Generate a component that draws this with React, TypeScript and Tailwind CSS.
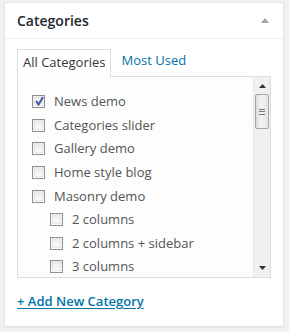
import React from "react";

const font = { fontFamily: '"Open Sans", "Noto Sans", sans-serif' };

function Box({ checked }: { checked?: boolean }) {
  return (
    <span className="relative inline-block w-[13px] h-[13px] border border-[#8f8f8f] bg-[linear-gradient(180deg,#eaeaea,#fdfdfd)] shrink-0">
      <span className="absolute inset-[1px] border border-[#e6e6e6]" />
      {checked && (
        <svg className="absolute left-[1px] top-[0px]" width="11" height="11" viewBox="0 0 11 11">
          <path d="M2.5 5.5 L4.6 8.6 L8.6 1.8" fill="none" stroke="#3d5aa8" strokeWidth="2" strokeLinecap="round" strokeLinejoin="round" />
        </svg>
      )}
    </span>
  );
}

function Row({ label, checked, child }: { label: string; checked?: boolean; child?: boolean }) {
  return (
    <div className={`flex items-center h-[23.6px] ${child ? "pl-[32px]" : "pl-[14px]"}`}>
      <Box checked={checked} />
      <span className="ml-[9px] text-[13px] text-[#555] leading-none">{label}</span>
    </div>
  );
}

export default function App() {
  return (
    <div className="w-[289px] h-[332px] bg-[#f1f1f1] pt-[2px] pl-[4px]" style={font}>
      <div className="w-[280px] h-[325px] bg-white border border-[#e5e5e5] shadow-[0_1px_1px_rgba(0,0,0,0.04)] flex flex-col">
        <div className="h-[36px] border-b border-[#eeeeee] flex items-center justify-between pl-[12px] pr-[14px]">
          <span className="text-[14px] font-semibold text-[#23282d] leading-none mt-[1px]">Categories</span>
          <svg width="8" height="5" viewBox="0 0 8 5" className="mt-[-1px]">
            <path d="M0 5 L4 0 L8 5 Z" fill="#a0a5aa" />
          </svg>
        </div>
        <div className="px-[12px] pt-[9px] flex flex-col">
          <div className="flex items-end h-[28px]">
            <div className="h-[28px] border border-b-0 border-[#dddddd] bg-white px-[5px] pt-[3px] text-[13px] text-[#32373c] leading-[19px] relative z-10 mb-[-1px]">
              All Categories
            </div>
            <div className="h-[28px] px-[10px] pt-[3px] text-[13px] text-[#0073aa] leading-[19px]">Most Used</div>
          </div>
          <div className="h-[202px] border border-[#dddddd] bg-[#fdfdfd] flex overflow-hidden">
            <div className="flex-1 pt-[13px] overflow-hidden">
              <Row label="News demo" checked />
              <Row label="Categories slider" />
              <Row label="Gallery demo" />
              <Row label="Home style blog" />
              <Row label="Masonry demo" />
              <Row label="2 columns" child />
              <Row label="2 columns + sidebar" child />
              <Row label="3 columns" child />
            </div>
            <div className="w-[17px] bg-[#f0f0f0] border-l border-[#e8e8e8] flex flex-col items-center relative">
              <svg width="7" height="4" viewBox="0 0 7 4" className="mt-[7px]">
                <path d="M0 4 L3.5 0 L7 4 Z" fill="#333" />
              </svg>
              <div className="mt-[6px] w-[14px] h-[35px] rounded-[2px] border border-[#a7a7a7] bg-[linear-gradient(90deg,#dcdcdc,#f4f4f4_40%,#e4e4e4)] flex flex-col items-center justify-center gap-[1.5px]">
                <span className="block w-[6px] h-[1px] bg-[#777]" />
                <span className="block w-[6px] h-[1px] bg-[#777]" />
                <span className="block w-[6px] h-[1px] bg-[#777]" />
              </div>
              <svg width="7" height="4" viewBox="0 0 7 4" className="absolute bottom-[7px]">
                <path d="M0 0 L3.5 4 L7 0 Z" fill="#333" />
              </svg>
            </div>
          </div>
          <div className="mt-[10px]">
            <span className="text-[13px] font-semibold text-[#0073aa] underline underline-offset-[2px] leading-[19px]">+ Add New Category</span>
          </div>
        </div>
      </div>
    </div>
  );
}
